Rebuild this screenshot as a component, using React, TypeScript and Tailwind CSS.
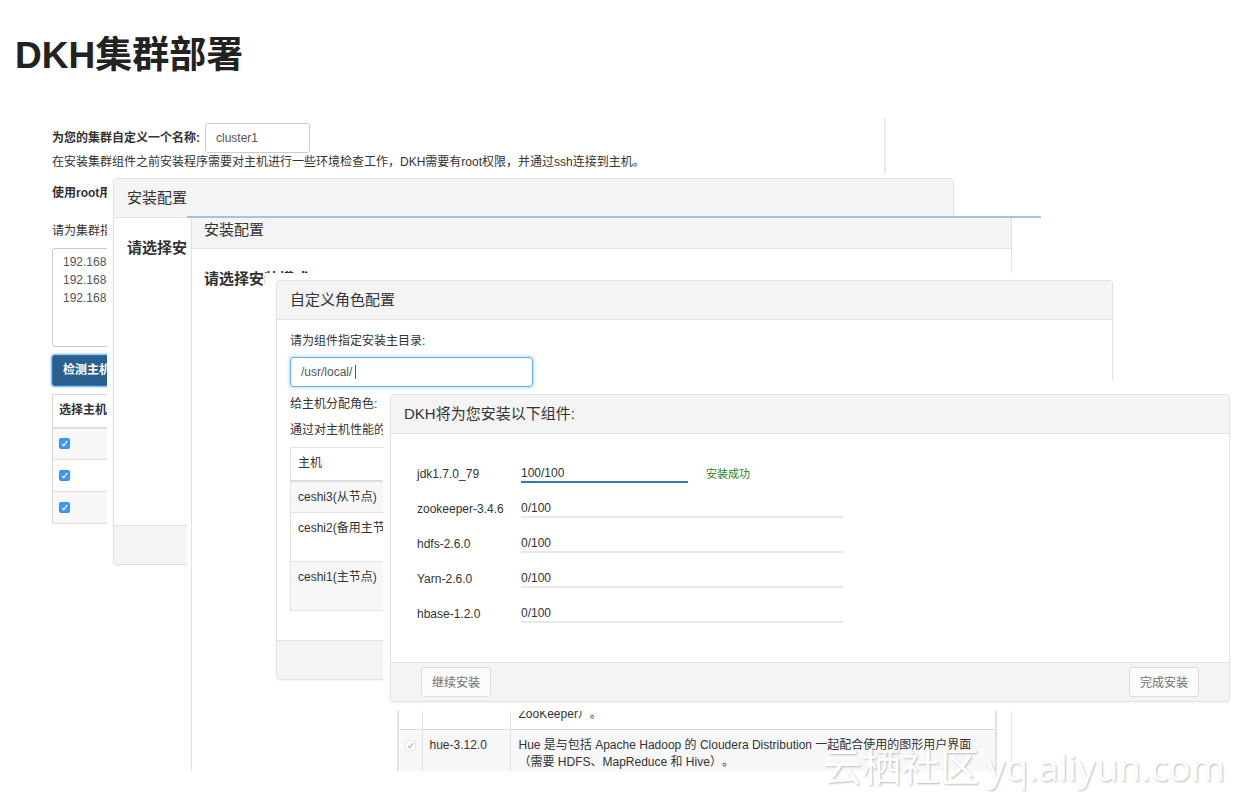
import { useState, type ReactNode } from "react";
import { clsx } from "clsx";

const components = [
    { name: "jdk1.7.0_79", done: 100, status: "安装成功" },
    { name: "zookeeper-3.4.6", done: 0 },
    { name: "hdfs-2.6.0", done: 0 },
    { name: "Yarn-2.6.0", done: 0 },
    { name: "hbase-1.2.0", done: 0 },
];

const roleHosts = [
    { name: "ceshi3(从节点)", row: "h-8 bg-[#f7f7f7]" },
    { name: "ceshi2(备用主节点)", row: "h-[49px]" },
    { name: "ceshi1(主节点)", row: "h-[49px] bg-[#f7f7f7]" },
];

function Tick({ className }: { className: string }) {
    return (
        <svg viewBox="0 0 11 11" className={clsx("pointer-events-none absolute inset-0", className)} fill="none" stroke="currentColor" strokeWidth="1.2">
            <path d="M3 5.8 4.8 7.8 8.2 2.8" />
        </svg>
    );
}

function HostCheckbox({ label }: { label: string }) {
    const [checked, setChecked] = useState(true);

    return (
        <span className="relative block size-[11px]">
            <input
                type="checkbox"
                aria-label={label}
                checked={checked}
                onChange={(e) => setChecked(e.target.checked)}
                className="block size-[11px] appearance-none rounded-[2px] border border-[#3b8ff5] checked:bg-[#3b97fb]"
            />
            {checked && <Tick className="text-white" />}
        </span>
    );
}

function PanelHeader({ children }: { children: ReactNode }) {
    return <h2 className="h-[39px] border-b border-[#e2e2e2] bg-[#f4f4f4] px-[13px] text-[15px] leading-[38px]">{children}</h2>;
}

function FooterButton({ children }: { children: ReactNode }) {
    return (
        <button type="button" className="h-[30px] rounded-[3px] border border-[#dcdcdc] bg-[#fbfbfb] px-[10px] pt-0.5 text-[#707070]">
            {children}
        </button>
    );
}

function ClusterStep() {
    const [name, setName] = useState("cluster1");
    const [hosts, setHosts] = useState("192.168\n192.168\n192.168");

    return (
        <section className="col-start-1 row-start-1 mt-2 ml-[52px] self-start">
            <div className="mr-[351px] h-14 border-r-2 border-[#ebebeb] pt-[5px]">
                <div className="flex items-center gap-[5px]">
                    <label htmlFor="cluster-name" className="font-bold">为您的集群自定义一个名称:</label>
                    <input
                        id="cluster-name"
                        value={name}
                        onChange={(e) => setName(e.target.value)}
                        className="h-[30px] w-[105px] rounded-[3px] border border-[#ccc] px-[10px] text-[#555]"
                    />
                </div>
                <p className="mt-px">在安装集群组件之前安装程序需要对主机进行一些环境检查工作，DKH需要有root权限，并通过ssh连接到主机。</p>
            </div>
            <p className="mt-[11px] font-bold">使用root用户</p>
            <label htmlFor="hosts" className="mt-[21px] block">请为集群指定</label>
            <textarea
                id="hosts"
                value={hosts}
                onChange={(e) => setHosts(e.target.value)}
                className="mt-2 block h-[99px] w-[200px] resize-none rounded-[3px] border border-[#ccc] px-[10px] py-1 leading-[18px] text-[#555]"
            />
            <button type="button" className="mt-2 block h-[31px] rounded-[3px] border border-[#2f77b5] bg-[#286090] px-[10px] font-bold text-white shadow-[0_0_2px_1px_#6aaaf0]">
                检测主机
            </button>
            <table className="mt-2 w-[200px] border border-[#dcd8d4]">
                <thead>
                    <tr className="h-[33px] border-b-2 border-[#dcdcdc]">
                        <th className="px-[6px] text-left">选择主机</th>
                    </tr>
                </thead>
                <tbody>
                    {[1, 2, 3].map((n) => (
                        <tr key={n} className="h-8 border-b border-[#dfdfdf] odd:bg-[#f8f8f8]">
                            <td className="px-[6px]">
                                <HostCheckbox label={`主机 ${n}`} />
                            </td>
                        </tr>
                    ))}
                </tbody>
            </table>
        </section>
    );
}

function ConfigStep() {
    return (
        <section className="col-start-1 row-start-1 mt-16 mr-[277px] ml-[107px] self-start bg-white px-[6px] pt-1 pb-2">
            <div className="rounded-[3px] border border-[#e2e2e2] shadow-xs">
                <PanelHeader>安装配置</PanelHeader>
                <h3 className="h-[307px] px-[13px] pt-[18px] text-[15px] leading-6 font-bold">请选择安装模式</h3>
                <div className="h-[39px] border-t border-[#e2e2e2] bg-[#f4f4f4]" />
            </div>
        </section>
    );
}

function ModeStep() {
    return (
        <section className="col-start-1 row-start-1 mt-[106px] mr-[196px] ml-[187px] self-start border-t-2 border-[#a9c1dd] bg-white pr-[29px] pl-1">
            <div className="border-x border-[#e2e2e2]">
                <h2 className="h-[31px] border-b border-[#e2e2e2] bg-[#f4f4f4] px-3 text-[15px] leading-6">安装配置</h2>
                <h3 className="h-[456px] px-3 pt-[18px] text-[15px] leading-6 font-bold">请选择安装模式</h3>
                <div className="mr-[14px] ml-[205px]">
                    <table className="w-full table-fixed border-x-2 border-[#e2e2e2]">
                        <colgroup>
                            <col className="w-6" />
                            <col className="w-[88px]" />
                            <col />
                        </colgroup>
                        <tbody>
                            <tr className="border-b border-[#dcdcdc] align-top">
                                <td className="border-r border-[#e2e2e2]" />
                                <td className="border-r border-[#e2e2e2]" />
                                <td className="px-2 pt-px pb-[6px]">ZooKeeper）。</td>
                            </tr>
                            <tr className="bg-[#f8f8f8] align-top">
                                <td className="border-r border-[#e2e2e2] px-[6px] pt-[10px]">
                                    <span className="relative block size-[11px]">
                                        <input type="checkbox" aria-label="hue-3.12.0" checked disabled readOnly className="block size-[11px] appearance-none rounded-[2px] border border-[#e6e6e6] bg-white" />
                                        <Tick className="text-[#b5b5b5]" />
                                    </span>
                                </td>
                                <td className="border-r border-[#e2e2e2] px-[7px] pt-[7px]">hue-3.12.0</td>
                                <td className="px-2 pt-[7px]">
                                    Hue 是与包括 Apache Hadoop 的 Cloudera Distribution 一起配合使用的图形用户界面
                                    <br />
                                    （需要 HDFS、MapReduce 和 Hive）。
                                </td>
                            </tr>
                        </tbody>
                    </table>
                </div>
            </div>
        </section>
    );
}

function RoleStep() {
    const [path, setPath] = useState("/usr/local/");

    return (
        <section className="col-start-1 row-start-1 mt-[163px] mr-[117px] ml-[265px] self-start bg-white pt-[7px] pr-[7px] pb-2 pl-[11px]">
            <div className="rounded-[3px] border border-[#e2e2e2] shadow-xs">
                <PanelHeader>自定义角色配置</PanelHeader>
                <div className="px-[13px] pt-[13px] pb-[29px]">
                    <label htmlFor="install-path" className="block">请为组件指定安装主目录:</label>
                    <div className="relative mt-[7px] w-[243px]">
                        <input
                            id="install-path"
                            value={path}
                            onChange={(e) => setPath(e.target.value)}
                            className="block h-[30px] w-full rounded-[3px] border border-[#66afe9] px-[10px] text-[#555] shadow-[0_0_4px_#9bcbf2]"
                        />
                        <span className="absolute top-2 left-[65px] h-[14px] w-px bg-[#555]" />
                    </div>
                    <p className="mt-[9px]">给主机分配角色:</p>
                    <p className="mt-[9px]">通过对主机性能的</p>
                    <table className="mt-2 w-[300px] border border-[#e2e2e2]">
                        <thead>
                            <tr className="h-[33px] border-b-2 border-[#dcdcdc]">
                                <th className="px-[7px] text-left font-normal">主机</th>
                            </tr>
                        </thead>
                        <tbody>
                            {roleHosts.map((host) => (
                                <tr key={host.name} className={clsx("border-b border-[#e2e2e2] align-top", host.row)}>
                                    <td className="px-[7px] pt-[7px]">{host.name}</td>
                                </tr>
                            ))}
                        </tbody>
                    </table>
                </div>
                <div className="h-[39px] border-t border-[#e2e2e2] bg-[#f4f4f4]" />
            </div>
        </section>
    );
}

function InstallStep() {
    return (
        <section className="col-start-1 row-start-1 mt-[271px] ml-[383px] self-start bg-white px-[7px] pt-[13px] pb-[9px]">
            <div className="rounded-[3px] border border-[#e2e2e2] shadow-xs">
                <PanelHeader>DKH将为您安装以下组件:</PanelHeader>
                <ul className="px-[26px] pt-[14px] pb-[39px]">
                    {components.map((item) => (
                        <li key={item.name} className="flex h-[35px] items-end leading-4">
                            <span className="w-[104px] pb-px">{item.name}</span>
                            <span className={clsx("border-b-2 text-[#333]", item.status ? "w-[167px] border-[#337ab7]" : "w-[322px] border-[#e8e8e8]")}>
                                {item.done}/100
                            </span>
                            {item.status && <span className="ml-[18px] pb-px text-[11px] text-[#1f8420]">{item.status}</span>}
                        </li>
                    ))}
                </ul>
                <div className="flex justify-between border-t border-[#e2e2e2] bg-[#f4f4f4] px-[30px] py-1">
                    <FooterButton>继续安装</FooterButton>
                    <FooterButton>完成安装</FooterButton>
                </div>
            </div>
        </section>
    );
}

export default function App() {
    return (
        <main className="relative bg-white pb-[30px] font-['Liberation_Sans','Noto_Sans_CJK_SC',sans-serif] text-[12px] leading-[17px] text-[#333] [text-spacing-trim:space-all]">
            <h1 className="px-[15px] pt-8 text-[37px] leading-[48px] font-bold text-[#222]">DKH集群部署</h1>
            <div className="mt-[30px] grid">
                <ClusterStep />
                <ConfigStep />
                <ModeStep />
                <RoleStep />
                <InstallStep />
            </div>
            <p className="pointer-events-none absolute right-3 bottom-4 flex items-baseline gap-2 text-[39px] leading-9 text-white [text-shadow:1px_1px_2px_#bbb]">
                <span className="font-['Noto_Sans_CJK_SC',sans-serif]">云栖社区</span>
                <span className="font-['Open_Sans',sans-serif] text-[37px]">yq.aliyun.com</span>
            </p>
        </main>
    );
}
